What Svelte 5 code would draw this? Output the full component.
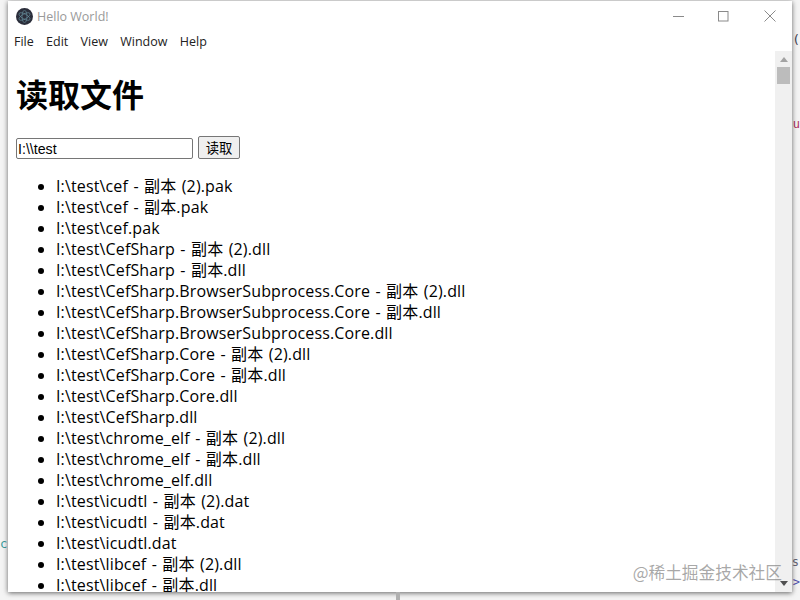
<script>
  // Electron demo window listing files from a folder.
  let dir = $state('I:\\\\test')
  const menus = ['File', 'Edit', 'View', 'Window', 'Help']
  const files = [
    'cef - 副本 (2).pak',
    'cef - 副本.pak',
    'cef.pak',
    'CefSharp - 副本 (2).dll',
    'CefSharp - 副本.dll',
    'CefSharp.BrowserSubprocess.Core - 副本 (2).dll',
    'CefSharp.BrowserSubprocess.Core - 副本.dll',
    'CefSharp.BrowserSubprocess.Core.dll',
    'CefSharp.Core - 副本 (2).dll',
    'CefSharp.Core - 副本.dll',
    'CefSharp.Core.dll',
    'CefSharp.dll',
    'chrome_elf - 副本 (2).dll',
    'chrome_elf - 副本.dll',
    'chrome_elf.dll',
    'icudtl - 副本 (2).dat',
    'icudtl - 副本.dat',
    'icudtl.dat',
    'libcef - 副本 (2).dll',
    'libcef - 副本.dll',
  ]
</script>

<div class="desk">
  <span class="peek p1">(</span>
  <span class="peek p2">u</span>
  <span class="peek p3">c</span>
  <span class="peek p4">s</span>
  <span class="peek p5">&gt;</span>
  <div class="seam"></div>

  <div class="win">
    <div class="titlebar">
      <svg class="logo" width="17" height="17" viewBox="0 0 17 17">
        <circle cx="8.5" cy="8.5" r="8.5" fill="#2b2e3b" />
        <g fill="none" stroke="#9feaf9" stroke-width="0.6" opacity="0.55">
          <ellipse cx="8.5" cy="8.5" rx="6.2" ry="2.5" transform="rotate(30 8.5 8.5)" />
          <ellipse cx="8.5" cy="8.5" rx="6.2" ry="2.5" transform="rotate(90 8.5 8.5)" />
          <ellipse cx="8.5" cy="8.5" rx="6.2" ry="2.5" transform="rotate(150 8.5 8.5)" />
        </g>
      </svg>
      <span class="title">Hello World!</span>
      <div class="ctrls">
        <svg width="14" height="14" viewBox="0 0 14 14"><path d="M2 7.5h11" stroke="#8a8a8a" fill="none" /></svg>
        <svg width="14" height="14" viewBox="0 0 14 14"><rect x="2.5" y="2.5" width="9.5" height="9.5" stroke="#8a8a8a" fill="none" /></svg>
        <svg class="close" width="14" height="14" viewBox="0 0 14 14"><path d="M1.5 1.5l11 11M12.5 1.5l-11 11" stroke="#8a8a8a" fill="none" /></svg>
      </div>
    </div>

    <div class="menubar">
      {#each menus as m}
        <span>{m}</span>
      {/each}
    </div>

    <div class="body">
      <div class="page">
        <h1>读取文件</h1>
        <div class="form">
          <input bind:value={dir} />
          <button>读取</button>
        </div>
        <ul>
          {#each files as f}
            <li>I:\test\{f}</li>
          {/each}
        </ul>
      </div>
      <div class="scroll">
        <div class="arrow up"></div>
        <div class="thumb"></div>
        <div class="track"></div>
        <div class="arrow down"></div>
      </div>
    </div>

    <div class="mark">@稀土掘金技术社区</div>
  </div>
</div>

<style>
  :global(body) {
    margin: 0;
    overflow: hidden;
  }
  .desk {
    position: relative;
    width: 800px;
    height: 600px;
    box-sizing: border-box;
    padding: 1px 8px 8px 8px;
    background: #f4f4f4;
    overflow: hidden;
    font-family: 'Open Sans', 'Noto Sans CJK SC', sans-serif;
  }
  .peek {
    position: absolute;
    font-size: 12px;
    font-family: 'DejaVu Sans Mono', monospace;
  }
  .p1 {
    right: 0;
    top: 32px;
    font-size: 13px;
    color: #445;
  }
  .p2 {
    right: 0;
    top: 117px;
    color: #b03060;
  }
  .p3 {
    left: 0;
    top: 537px;
    color: #3a9a9a;
  }
  .p4 {
    right: 1px;
    top: 555px;
    color: #667;
  }
  .p5 {
    right: 0;
    top: 575px;
    color: #5555b0;
  }
  .seam {
    position: absolute;
    left: 396px;
    bottom: 0;
    width: 4px;
    height: 8px;
    background: #b0b0b0;
    z-index: 2;
  }
  .win {
    position: relative;
    width: 784px;
    height: 591px;
    background: #fff;
    display: flex;
    flex-direction: column;
    overflow: hidden;
    box-shadow: 0 1px 5px rgba(0, 0, 0, 0.6);
    z-index: 1;
  }
  .titlebar {
    height: 30px;
    display: flex;
    align-items: center;
    padding-left: 8px;
    flex: none;
  }
  .logo {
    margin-right: 4px;
  }
  .title {
    font-size: 12.5px;
    color: #9a9a9a;
  }
  .ctrls {
    margin-left: auto;
    display: flex;
    gap: 31px;
    padding-right: 15px;
  }
  .close {
    margin-left: 2px;
  }
  .menubar {
    height: 20px;
    display: flex;
    gap: 12.3px;
    align-items: center;
    padding-left: 6px;
    font-size: 12.5px;
    color: #222;
    flex: none;
  }
  .body {
    flex: 1;
    min-height: 0;
    display: flex;
  }
  .page {
    flex: 1;
    overflow: hidden;
    padding: 0 8px;
    color: #000;
  }
  h1 {
    margin: 19px 0 19px;
    font-size: 32px;
    line-height: 47px;
    font-weight: 700;
    font-family: 'Noto Sans CJK SC', sans-serif;
  }
  .form {
    display: flex;
    align-items: flex-end;
    gap: 5px;
    height: 23px;
  }
  input {
    width: 177px;
    height: 21px;
    box-sizing: border-box;
    border: 1px solid #767676;
    border-radius: 2px;
    padding: 1px;
    font-size: 14.2px;
    font-family: 'Liberation Sans', sans-serif;
    color: #000;
    outline: none;
  }
  button {
    width: 42px;
    height: 23px;
    box-sizing: border-box;
    border: 1px solid #767676;
    border-radius: 2px;
    background: #efefef;
    padding: 0;
    font-size: 13.33px;
    font-family: 'Noto Sans CJK SC', sans-serif;
    color: #000;
  }
  ul {
    margin: 17px 0;
    padding-left: 40px;
    font-size: 16px;
    line-height: 21px;
    letter-spacing: 0.14px;
    word-spacing: 1.1px;
  }
  li {
    white-space: nowrap;
  }
  .scroll {
    width: 17px;
    flex: none;
    background: #f0f0f0;
    display: flex;
    flex-direction: column;
    align-items: center;
  }
  .arrow {
    width: 0;
    height: 0;
    flex: none;
    border-left: 4px solid transparent;
    border-right: 4px solid transparent;
  }
  .up {
    margin: 6px 0 5px;
    border-bottom: 5px solid #a3a3a3;
  }
  .down {
    margin: 5px 0 6px;
    border-top: 5px solid #505050;
  }
  .thumb {
    width: 13px;
    height: 17px;
    flex: none;
    background: #bcbcbc;
  }
  .track {
    flex: 1;
  }
  .mark {
    position: absolute;
    right: 10px;
    bottom: 8px;
    font-size: 16.7px;
    line-height: 24px;
    color: rgba(110, 110, 110, 0.6);
    font-family: 'Noto Sans CJK SC', sans-serif;
  }
</style>
